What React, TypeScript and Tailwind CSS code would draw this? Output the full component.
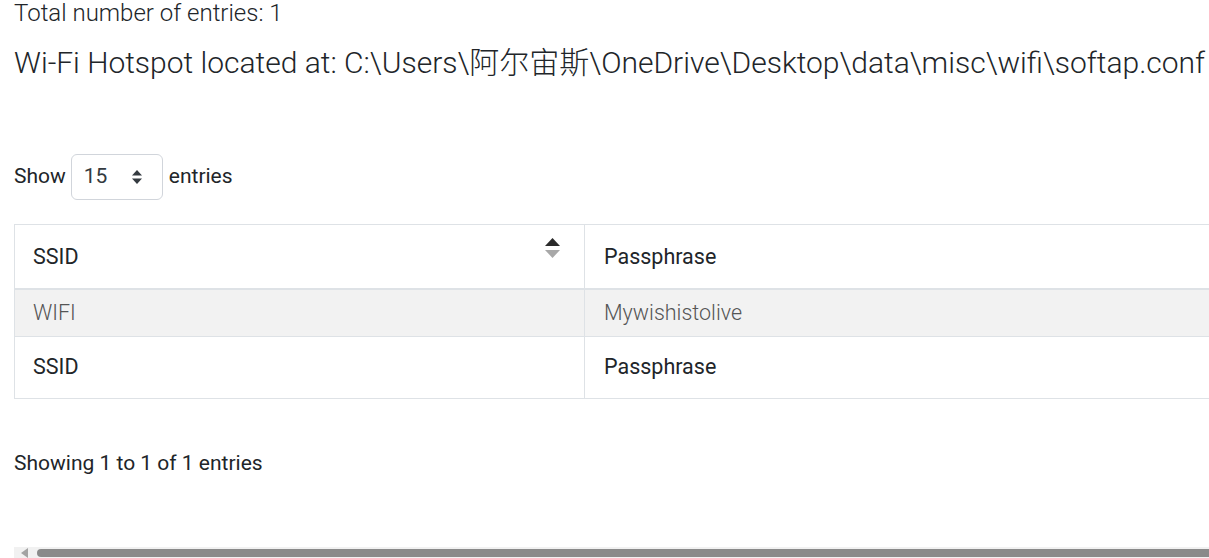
import React from "react";

function SortIcon() {
  return (
    <svg width="17" height="24" viewBox="0 0 17 24" className="block">
      <path d="M1 10 L8.5 2 L16 10 Z" fill="#2b2b2b" />
      <path d="M1 14 L8.5 22 L16 14 Z" fill="#a8a8a8" />
    </svg>
  );
}

function SelectArrows() {
  return (
    <svg width="12" height="18" viewBox="0 0 12 18" className="block">
      <path d="M1 7.5 L6 2 L11 7.5 Z" fill="#343a40" />
      <path d="M1 10.5 L6 16 L11 10.5 Z" fill="#343a40" />
    </svg>
  );
}

export default function App() {
  return (
    <div
      className="w-[1209px] h-[558px] overflow-hidden bg-white text-[#212529] relative"
      style={{ fontFamily: "Roboto, 'Noto Sans CJK SC', sans-serif" }}
    >
      <div className="pl-[14px]">
        <div className="text-[24px] leading-[28px] font-light -mt-[1px]">Total number of entries: 1</div>
        <div className="text-[30px] leading-[40px] font-light mt-[16px] whitespace-nowrap">
          Wi-Fi Hotspot located at: C:\Users\阿尔宙斯\OneDrive\Desktop\data\misc\wifi\softap.conf
        </div>
        <div className="flex items-center mt-[71px] text-[21px] h-[46px]">
          <span>Show</span>
          <div className="ml-[5px] w-[92px] h-[46px] border border-[#d1d5db] rounded-[6px] flex items-center justify-between pl-[12px] pr-[19px]">
            <span className="text-[21px] text-[#343a40]">15</span>
            <SelectArrows />
          </div>
          <span className="ml-[6px]">entries</span>
        </div>
        <div className="mt-[24px] w-[1400px]">
          <table className="border-collapse w-full text-[21.5px]">
            <thead>
              <tr className="h-[64px]">
                <th className="w-[570px] border-t border-l border-r border-[#dee2e6] border-b-2 font-normal text-left pl-[18px] pr-[23px] pt-[1px] relative">
                  <div className="flex items-center justify-between">
                    <span>SSID</span>
                    <span className="-mt-[18px]"><SortIcon /></span>
                  </div>
                </th>
                <th className="border-t border-r border-[#dee2e6] border-b-2 font-normal text-left pl-[19px] pt-[1px]">Passphrase</th>
              </tr>
            </thead>
            <tbody>
              <tr className="h-[48px] bg-[#f2f2f2] text-[#555]">
                <td className="border-l border-r border-b border-[#dee2e6] pl-[18px] font-light">WIFI</td>
                <td className="border-r border-b border-[#dee2e6] pl-[19px] font-light">Mywishistolive</td>
              </tr>
            </tbody>
            <tfoot>
              <tr className="h-[62px]">
                <td className="border-l border-r border-b border-[#dee2e6] pl-[18px]">SSID</td>
                <td className="border-r border-b border-[#dee2e6] pl-[19px]">Passphrase</td>
              </tr>
            </tfoot>
          </table>
        </div>
        <div className="mt-[49px] text-[21px] leading-[30px]">Showing 1 to 1 of 1 entries</div>
      </div>
      <div className="absolute left-[14px] right-0 top-[547px] h-[11px] bg-[#f1f1f1] flex items-center">
        <svg width="8" height="10" viewBox="0 0 8 10" className="ml-[7px]">
          <path d="M7 0 L0 5 L7 10 Z" fill="#a3a3a3" />
        </svg>
        <div className="ml-[8px] flex-1 h-[8px] rounded-l-full bg-[#8a8a8a]" />
      </div>
    </div>
  );
}
